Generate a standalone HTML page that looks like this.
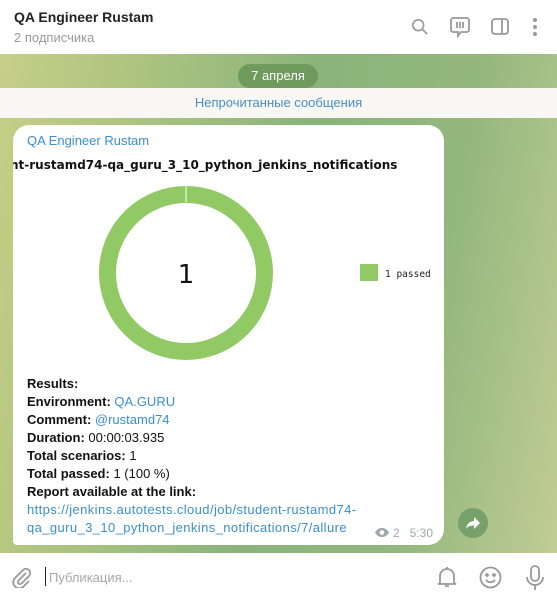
<!DOCTYPE html>
<html><head><meta charset="utf-8"><style>
*{margin:0;padding:0;box-sizing:border-box}
body{width:557px;height:598px;overflow:hidden;font-family:"Liberation Sans","DejaVu Sans",sans-serif;position:relative;background:#fff}
.hdr{position:absolute;left:0;top:0;width:557px;height:54px;background:#fff}
.t1{position:absolute;left:14px;top:9px;font-size:14px;font-weight:bold;color:#222}
.t2{position:absolute;left:14px;top:30px;font-size:13px;color:#999}
.wall{position:absolute;left:0;top:54px;width:557px;height:499px;background:linear-gradient(100deg,#c6cf86 0%,#a9c27f 25%,#8ab47c 50%,#93b77e 75%,#c1cd93 100%)}
.date{position:absolute;left:238px;top:64px;width:80px;height:24px;border-radius:12px;background:#6e9a5c;color:#fff;font-size:13px;text-align:center;line-height:23px}
.unread{position:absolute;left:0;top:88px;width:557px;height:30px;background:#f8f7f3;color:#4c8ec4;font-size:13px;text-align:center;line-height:30px}
.bub{position:absolute;left:13px;top:125px;width:431px;height:420px;background:#fff;border-radius:16px 16px 16px 4px}
.name{position:absolute;left:27px;top:133px;font-size:13px;color:#3a8fd0}
.job{position:absolute;left:13px;top:158px;font-weight:bold;color:#111;white-space:nowrap;width:403px;overflow:hidden;font-family:"DejaVu Sans",sans-serif;font-size:12px}
.txt{position:absolute;left:27px;top:375px;line-height:18px;color:#111;font-size:13px}
.lnk{letter-spacing:0.4px}
a{color:#3a8fd0;text-decoration:none}
.meta{position:absolute;right:124px;top:526px;font-size:12px;color:#a0a8ae;white-space:nowrap}
.fwd{position:absolute;left:458px;top:508px;width:30px;height:30px;border-radius:50%;background:#77a06a}
.bot{position:absolute;left:0;top:553px;width:557px;height:45px;background:#fff}
.ph{position:absolute;left:49px;top:570px;font-size:13px;color:#a8a8a8}
.cur{position:absolute;left:45px;top:567px;width:1px;height:19px;background:#222}
</style></head><body>
<div class="hdr"><div class="t1">QA Engineer Rustam</div><div class="t2">2 подписчика</div>
<svg style="position:absolute;left:411px;top:18px" width="18" height="18" viewBox="0 0 20 20" fill="none" stroke="#999" stroke-width="1.8"><circle cx="8" cy="8" r="6"/><path d="M12.5 12.5L18 18"/></svg>
<svg style="position:absolute;left:449px;top:16px" width="22" height="22" viewBox="0 0 22 22" fill="none" stroke="#999" stroke-width="1.8"><path d="M4 2h14a2 2 0 0 1 2 2v10a2 2 0 0 1-2 2h-6l-3 4v-4H4a2 2 0 0 1-2-2V4a2 2 0 0 1 2-2z"/><path d="M8 6v6M11 6v6M14 6v6"/></svg>
<svg style="position:absolute;left:490px;top:17px" width="20" height="20" viewBox="0 0 20 20" fill="none" stroke="#999" stroke-width="1.8"><rect x="2" y="2" width="16" height="15" rx="3"/><path d="M12 2v15"/></svg>
<svg style="position:absolute;left:531px;top:17px" width="8" height="20"><circle cx="4" cy="3" r="2" fill="#999"/><circle cx="4" cy="10" r="2" fill="#999"/><circle cx="4" cy="17" r="2" fill="#999"/></svg>
</div>
<div class="wall"></div>
<div class="date">7 апреля</div>
<div class="unread">Непрочитанные сообщения</div>
<div class="bub"></div>
<div class="name">QA Engineer Rustam</div>
<div class="job"><span style="position:relative;left:-3px">nt-rustamd74-qa_guru_3_10_python_jenkins_notifications</span></div>
<svg style="position:absolute;left:90px;top:180px" width="350" height="190">
<circle cx="96" cy="93" r="78.5" fill="none" stroke="#91c965" stroke-width="17"/>
<line x1="96" y1="5" x2="96" y2="22" stroke="#fff" stroke-width="1"/>
<text x="96" y="103" font-family="DejaVu Sans,sans-serif" font-size="26" text-anchor="middle" fill="#111">1</text>
<rect x="270" y="84" width="18" height="17" fill="#91c965"/>
<text x="295" y="97" font-family="DejaVu Sans Mono,monospace" font-size="9.5" fill="#222">1 passed</text>
</svg>
<div class="txt"><b>Results:</b><br><b>Environment:</b> <a>QA.GURU</a><br><b>Comment:</b> <a>@rustamd74</a><br><b>Duration:</b> 00:00:03.935<br><b>Total scenarios:</b> 1<br><b>Total passed:</b> 1 (100 %)<br><b>Report available at the link:</b><br><a class="lnk">https://jenkins.autotests.cloud/job/student-rustamd74-<br>qa_guru_3_10_python_jenkins_notifications/7/allure</a></div>
<div class="meta"><svg width="16" height="11" viewBox="0 0 16 11" style="vertical-align:-1px"><path d="M1 5.5C3 2 5.5 1 8 1s5 1 7 4.5C13 9 10.5 10 8 10S3 9 1 5.5z" fill="#a0a8ae"/><circle cx="8" cy="5.5" r="2.3" fill="#fff"/></svg> 2&nbsp;&nbsp;&nbsp;5:30</div>
<div class="fwd"><svg width="30" height="30" viewBox="0 0 30 30"><path d="M16 9l6 6-6 6v-3.5c-4 0-6.5 1-8 3.5 0.5-4.5 3-7.5 8-8z" fill="#fff"/></svg></div>
<div class="bot"></div>
<svg style="position:absolute;left:11px;top:566px" width="22" height="22" viewBox="0 0 22 22" fill="none" stroke="#999" stroke-width="1.8"><path d="M15 7l-7.5 7.5a2 2 0 0 0 3 3L18 10a4 4 0 0 0-6-6L4 12a6 6 0 0 0 8.5 8.5L18 15"/></svg>
<div class="cur"></div><div class="ph">Публикация...</div>
<svg style="position:absolute;left:436px;top:565px" width="22" height="24" viewBox="0 0 22 24" fill="none" stroke="#999" stroke-width="1.8"><path d="M4 18V11a7 7 0 0 1 14 0v7l2 1H2z"/><path d="M11 2v2M9 21h4"/></svg>
<svg style="position:absolute;left:479px;top:566px" width="23" height="23" viewBox="0 0 23 23" fill="none" stroke="#999" stroke-width="1.8"><circle cx="11.5" cy="11.5" r="10"/><circle cx="8" cy="9" r="1" fill="#999"/><circle cx="15" cy="9" r="1" fill="#999"/><path d="M7 14c2.5 3 6.5 3 9 0"/></svg>
<svg style="position:absolute;left:525px;top:565px" width="20" height="26" viewBox="0 0 20 26" fill="none" stroke="#999" stroke-width="1.8"><rect x="6" y="1" width="8" height="15" rx="4"/><path d="M2 12a8 8 0 0 0 16 0M10 20v5"/></svg>
</body></html>
